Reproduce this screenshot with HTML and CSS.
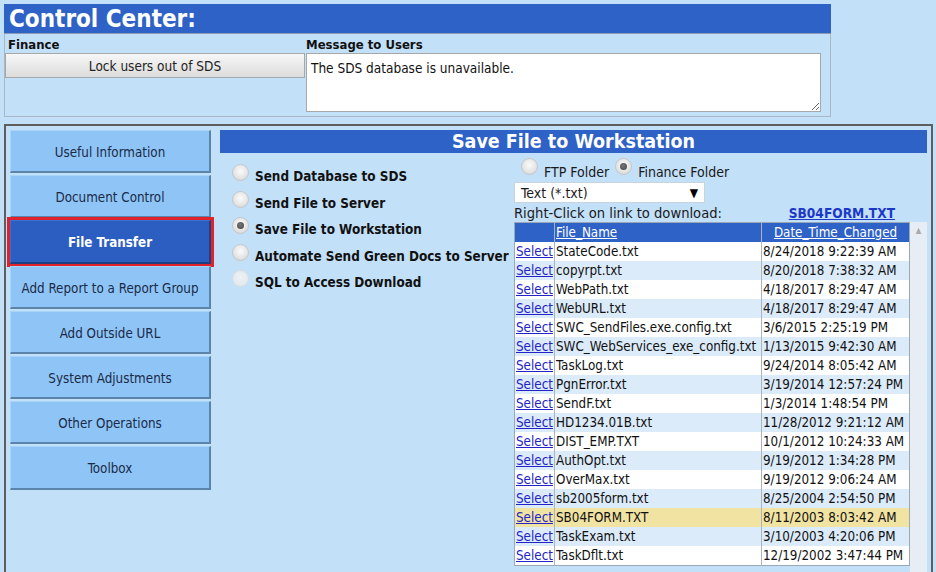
FILE: index.html
```html
<!DOCTYPE html>
<html>
<head>
<meta charset="utf-8">
<link rel="stylesheet" href="styles.css">
</head>
<body>
<div class="cc">
  <div class="cc-title">Control Center:</div>
  <div class="cc-body">
    <div class="col-fin">
      <div class="lbl">Finance</div>
      <button class="lock">Lock users out of SDS</button>
    </div>
    <div class="col-msg">
      <div class="lbl">Message to Users</div>
      <textarea class="msg">The SDS database is unavailable.</textarea>
    </div>
  </div>
</div>

<div class="main">
  <nav class="nav">
    <div class="nav-btn">Useful Information</div>
    <div class="nav-btn">Document Control</div>
    <div class="nav-btn active">File Transfer</div>
    <div class="nav-btn">Add Report to a Report Group</div>
    <div class="nav-btn">Add Outside URL</div>
    <div class="nav-btn">System Adjustments</div>
    <div class="nav-btn">Other Operations</div>
    <div class="nav-btn">Toolbox</div>
  </nav>
  <section class="content">
    <div class="content-title">Save File to Workstation</div>
    <div class="content-body">
      <div class="options">
        <div class="opt"><span class="radio"></span><span class="opt-text">Send Database to SDS</span></div>
        <div class="opt"><span class="radio"></span><span class="opt-text">Send File to Server</span></div>
        <div class="opt"><span class="radio checked"></span><span class="opt-text">Save File to Workstation</span></div>
        <div class="opt"><span class="radio"></span><span class="opt-text">Automate Send Green Docs to Server</span></div>
        <div class="opt"><span class="radio disabled"></span><span class="opt-text">SQL to Access Download</span></div>
      </div>
      <div class="files">
        <div class="folder-row">
          <span class="radio"></span><span class="folder-text">FTP Folder</span>
          <span class="radio checked"></span><span class="folder-text">Finance Folder</span>
        </div>
        <div class="dropdown"><span>Text (*.txt)</span><span class="arrow">▼</span></div>
        <div class="dl-row"><span class="dl-label">Right-Click on link to download:</span><a class="dl-link">SB04FORM.TXT</a></div>
        <div class="grid-wrap">
          <table class="grid">
            <colgroup><col class="w-sel"><col class="w-name"><col class="w-date"></colgroup>
            <thead>
              <tr><th></th><th><a>File_Name</a></th><th class="c-date"><a>Date_Time_Changed</a></th></tr>
            </thead>
            <tbody>
              <tr><td><a>Select</a></td><td>StateCode.txt</td><td>8/24/2018 9:22:39 AM</td></tr>
              <tr class="alt"><td><a>Select</a></td><td>copyrpt.txt</td><td>8/20/2018 7:38:32 AM</td></tr>
              <tr><td><a>Select</a></td><td>WebPath.txt</td><td>4/18/2017 8:29:47 AM</td></tr>
              <tr class="alt"><td><a>Select</a></td><td>WebURL.txt</td><td>4/18/2017 8:29:47 AM</td></tr>
              <tr><td><a>Select</a></td><td>SWC_SendFiles.exe.config.txt</td><td>3/6/2015 2:25:19 PM</td></tr>
              <tr class="alt"><td><a>Select</a></td><td>SWC_WebServices_exe_config.txt</td><td>1/13/2015 9:42:30 AM</td></tr>
              <tr><td><a>Select</a></td><td>TaskLog.txt</td><td>9/24/2014 8:05:42 AM</td></tr>
              <tr class="alt"><td><a>Select</a></td><td>PgnError.txt</td><td>3/19/2014 12:57:24 PM</td></tr>
              <tr><td><a>Select</a></td><td>SendF.txt</td><td>1/3/2014 1:48:54 PM</td></tr>
              <tr class="alt"><td><a>Select</a></td><td>HD1234.01B.txt</td><td>11/28/2012 9:21:12 AM</td></tr>
              <tr><td><a>Select</a></td><td>DIST_EMP.TXT</td><td>10/1/2012 10:24:33 AM</td></tr>
              <tr class="alt"><td><a>Select</a></td><td>AuthOpt.txt</td><td>9/19/2012 1:34:28 PM</td></tr>
              <tr><td><a>Select</a></td><td>OverMax.txt</td><td>9/19/2012 9:06:24 AM</td></tr>
              <tr class="alt"><td><a>Select</a></td><td>sb2005form.txt</td><td>8/25/2004 2:54:50 PM</td></tr>
              <tr class="sel"><td><a>Select</a></td><td>SB04FORM.TXT</td><td>8/11/2003 8:03:42 AM</td></tr>
              <tr class="alt"><td><a>Select</a></td><td>TaskExam.txt</td><td>3/10/2003 4:20:06 PM</td></tr>
              <tr><td><a>Select</a></td><td>TaskDflt.txt</td><td>12/19/2002 3:47:44 PM</td></tr>
            </tbody>
          </table>
          <div class="scrollbar"><span class="up">▲</span></div>
        </div>
      </div>
    </div>
  </section>
</div>
</body>
</html>
```

FILE: styles.css
```css
html, body {
  margin: 0;
  padding: 0;
}
body {
  background: #c3e0f9;
  padding: 4px;
  height: 572px;
  box-sizing: border-box;
  overflow: hidden;
  font-family: "DejaVu Sans Condensed", "DejaVu Sans", sans-serif;
  font-stretch: semi-condensed;
  font-size: 13px;
  color: #1a1a1a;
}

/* ---------- Control center ---------- */
.cc {
  width: 827px;
}
.cc-title {
  height: 29px;
  line-height: 30px;
  background: #2e62c7;
  color: #fff;
  font-weight: bold;
  font-size: 24px;
  padding-left: 5px;
  border-bottom: 1px solid #8a9cb5;
}
.cc-body {
  display: flex;
  height: 82px;
  border: 1px solid #a9b6c4;
  border-top: none;
}
.col-fin {
  width: 301px;
  flex: none;
  display: flex;
  flex-direction: column;
}
.col-msg {
  display: flex;
  flex-direction: column;
}
.lbl {
  height: 19px;
  line-height: 22px;
  font-weight: bold;
  padding-left: 3px;
  font-size: 13px;
  color: #111;
}
.col-msg .lbl { padding-left: 0; }
.lock {
  width: 300px;
  height: 25px;
  border: 1px solid #a8a8a8;
  background: linear-gradient(#f7f7f7, #dcdcdc);
  font-family: inherit;
  font-stretch: inherit;
  font-size: 13.5px;
  color: #222;
  padding: 0;
  margin: 0;
}
.msg {
  width: 515px;
  height: 59px;
  box-sizing: border-box;
  border: 1px solid #a8a8a8;
  padding: 6px 4px 2px 4px;
  font-family: inherit;
  font-stretch: inherit;
  font-size: 13.5px;
  color: #111;
  margin: 0;
  resize: both;
}

/* ---------- Main panel ---------- */
.main {
  margin-top: 7px;
  width: 929px;
  height: 470px;
  box-sizing: border-box;
  border: 2px solid #5e5e5e;
  padding: 4px;
  display: flex;
  gap: 9px;
}
.nav {
  width: 201px;
  flex: none;
  display: flex;
  flex-direction: column;
  gap: 2px;
}
.nav-btn {
  height: 43.2px;
  box-sizing: border-box;
  padding-top: 3px;
  background: #8ec5f6;
  border-top: 1px solid #a8d4fa;
  border-left: 1px solid #a8d4fa;
  border-right: 2px solid #5c84ab;
  border-bottom: 2px solid #5c84ab;
  display: flex;
  align-items: center;
  justify-content: center;
  color: #1c2a48;
  font-size: 13.3px;
}
.nav-btn.active {
  background: #2c5ec2;
  border-top-color: #3b6fd2;
  border-left-color: #3b6fd2;
  border-right-color: #1d3f85;
  border-bottom-color: #1d3f85;
  color: #fff;
  font-weight: bold;
  outline: 3px solid #e0232b;
}

.content {
  flex: 1;
  min-width: 0;
  display: flex;
  flex-direction: column;
}
.content-title {
  height: 23px;
  line-height: 24px;
  background: #2e62c7;
  color: #fff;
  font-weight: bold;
  font-size: 19.5px;
  text-align: center;
}
.content-body {
  display: flex;
  flex: 1;
}

/* radios */
.radio {
  width: 17px;
  height: 17px;
  box-sizing: border-box;
  border-radius: 50%;
  border: 1px solid #c3c6ca;
  background: radial-gradient(circle at 50% 40%, #fbfbfb 0%, #e6e6e6 55%, #cfcfcf 100%);
  flex: none;
  position: relative;
}
.radio.checked::after {
  content: "";
  position: absolute;
  left: 4px;
  top: 4px;
  width: 7px;
  height: 7px;
  border-radius: 50%;
  background: radial-gradient(circle at 45% 40%, #777 0%, #444 100%);
}
.radio.disabled {
  border-color: #d5dde5;
  background: radial-gradient(circle at 50% 40%, #eef2f5 0%, #dfe5eb 100%);
}

.options {
  width: 294px;
  flex: none;
  padding-top: 11px;
  padding-left: 12px;
  box-sizing: border-box;
}
.opt {
  height: 26.5px;
  display: flex;
  align-items: flex-start;
}
.opt-text {
  margin-left: 6px;
  margin-top: 5px;
  font-weight: bold;
  font-size: 13.4px;
  line-height: 16px;
  color: #111;
  white-space: nowrap;
}

.files {
  flex: 1;
  min-width: 0;
  display: flex;
  flex-direction: column;
  padding-top: 5px;
  font-size: 14px;
}
.folder-row {
  height: 24px;
  display: flex;
  align-items: flex-start;
  padding-left: 7px;
}
.folder-text {
  margin: 6px 6px 0 6px;
  line-height: 16px;
}
.dropdown {
  width: 191px;
  height: 21px;
  box-sizing: border-box;
  background: #fff;
  border: 1px solid #c9d3dc;
  display: flex;
  align-items: center;
  justify-content: space-between;
  padding: 0 6px 0 6px;
}
.dropdown .arrow {
  font-size: 12px;
  color: #000;
}
.dl-row {
  width: 396px;
  height: 19px;
  display: flex;
  align-items: center;
  justify-content: space-between;
  padding-right: 15px;
  box-sizing: border-box;
}
.dl-label {
  font-size: 14.6px;
}
.dl-link {
  color: #1c38c9;
  font-weight: bold;
  font-size: 13.6px;
  text-decoration: underline;
}

.grid-wrap {
  display: flex;
  align-items: stretch;
  flex: 1;
}
.grid {
  width: 395px;
  flex: none;
  table-layout: fixed;
  border-collapse: collapse;
  border: 1px solid #9aa8b6;
  align-self: flex-start;
  font-size: 13.3px;
}
.w-sel { width: 40px; }
.w-name { width: 207px; }
.w-date { width: 148px; }
.grid th {
  background: #2e62c7;
  height: 19px;
  padding: 0 1px;
  font-weight: normal;
  text-align: left;
}
.grid th a {
  color: #fff;
  text-decoration: underline;
}
.grid th.c-date { text-align: center; }
.grid td {
  height: 19px;
  padding: 0 1px;
  white-space: nowrap;
  overflow: hidden;
  background: #fff;
  color: #111;
  line-height: 18px;
}
.grid th:nth-child(1), .grid th:nth-child(2) { border-right: 1px solid #a9b4bf; }
.grid td:nth-child(1), .grid td:nth-child(2) { border-right: 1px solid #a9b4bf; }
.grid tr.alt td { background: #dcebf9; }
.grid tr.sel td { background: #f1e3a1; }
.grid td:first-child a {
  color: #2323c8;
  text-decoration: underline;
}
.scrollbar {
  width: 17px;
  flex: none;
  background: #e6edf4;
  display: flex;
  justify-content: center;
}
.scrollbar .up {
  font-size: 8px;
  color: #a9a9a9;
  margin-top: 4px;
}
```
